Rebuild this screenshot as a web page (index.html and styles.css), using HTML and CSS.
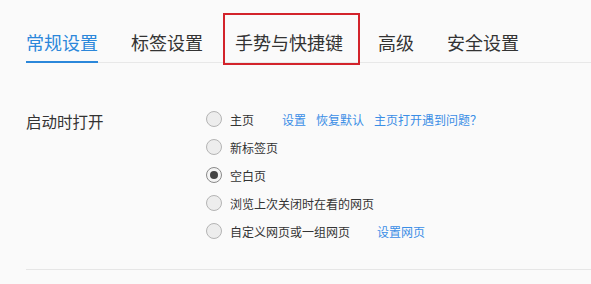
FILE: index.html
```html
<!DOCTYPE html>
<html lang="zh-CN">
<head>
  <meta charset="UTF-8">
  <title>设置</title>
  <link rel="stylesheet" href="styles.css">
</head>
<body>
  <div class="tabs">
    <div class="tab active">常规设置</div>
    <div class="tab">标签设置</div>
    <div class="tab marked">手势与快捷键</div>
    <div class="tab">高级</div>
    <div class="tab">安全设置</div>
  </div>

  <div class="section">
    <div class="section-title">启动时打开</div>
    <div class="options">
      <div class="option">
        <span class="radio"></span>
        <span class="label">主页</span>
        <span class="links">
          <a href="#">设置</a>
          <a href="#">恢复默认</a>
          <a href="#">主页打开遇到问题？</a>
        </span>
      </div>
      <div class="option">
        <span class="radio"></span>
        <span class="label">新标签页</span>
      </div>
      <div class="option">
        <span class="radio checked"></span>
        <span class="label">空白页</span>
      </div>
      <div class="option">
        <span class="radio"></span>
        <span class="label">浏览上次关闭时在看的网页</span>
      </div>
      <div class="option">
        <span class="radio"></span>
        <span class="label">自定义网页或一组网页</span>
        <span class="links wide">
          <a href="#">设置网页</a>
        </span>
      </div>
    </div>
  </div>
</body>
</html>
```

FILE: styles.css
```css
body {
  margin: 0;
  background: #fafafa;
  font-family: "Microsoft YaHei", "Noto Sans CJK SC", sans-serif;
  color: #333;
}

.tabs {
  display: flex;
  gap: 33px;
  margin-left: 26px;
  padding-top: 30px;
  border-bottom: 1px solid #e8e8e8;
}

.tab {
  position: relative;
  font-size: 18px;
  line-height: 24px;
  padding-bottom: 8px;
  color: #333;
}

.tab.active {
  color: #2b87da;
  border-bottom: 2px solid #2b87da;
  margin-bottom: -1px;
  padding-bottom: 7px;
}

.tab.marked {
  margin-left: -1px;
  margin-right: 2px;
}

/* red highlight box drawn around the tab */
.tab.marked::after {
  content: "";
  position: absolute;
  left: -12px;
  right: -17px;
  top: -17px;
  bottom: -3px;
  border: 2px solid #d3232b;
}

.section {
  display: flex;
  margin-left: 26px;
  padding-top: 42px;
  padding-bottom: 24px;
  border-bottom: 1px solid #e6e6e6;
}

.section-title {
  width: 180px;
  font-size: 15.5px;
  line-height: 20px;
  padding-top: 6px;
}

.options {
  display: flex;
  flex-direction: column;
}

.option {
  display: flex;
  align-items: center;
  height: 28px;
  font-size: 12px;
}

.radio {
  box-sizing: border-box;
  width: 16px;
  height: 16px;
  border: 1px solid #b4b4b4;
  border-radius: 50%;
  background: #ededed;
  margin-right: 8px;
  display: flex;
  align-items: center;
  justify-content: center;
}

.radio.checked {
  background: #f4f4f4;
  border-color: #8a8a8a;
}

.radio.checked::after {
  content: "";
  width: 8px;
  height: 8px;
  border-radius: 50%;
  background: #444;
}

.label {
  color: #333;
}

.links {
  display: flex;
  gap: 10px;
  margin-left: 28px;
}

.links.wide {
  margin-left: 27px;
}

.links a {
  color: #3a8ee6;
  text-decoration: none;
}
```
